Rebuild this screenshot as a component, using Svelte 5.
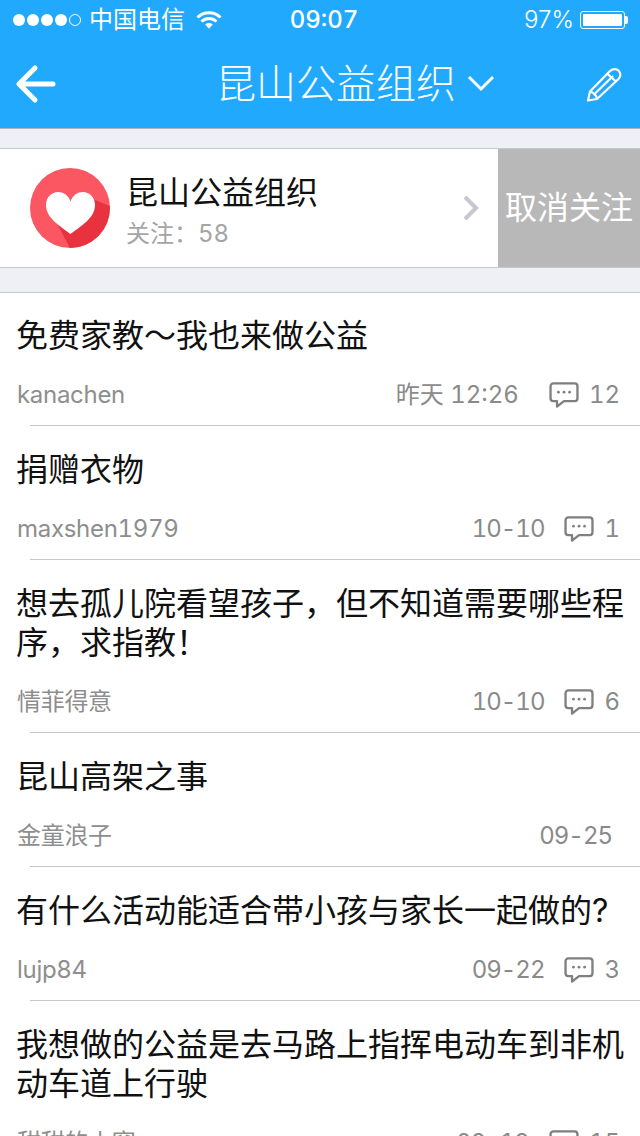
<script>
	const topics = [
		{ title: '免费家教～我也来做公益', author: 'kanachen', date: '昨天 12:26', count: 12 },
		{ title: '捐赠衣物', author: 'maxshen1979', date: '10-10', count: 1 },
		{ title: '想去孤儿院看望孩子，但不知道需要哪些程序，求指教！', author: '情菲得意', date: '10-10', count: 6 },
		{ title: '昆山高架之事', author: '金童浪子', date: '09-25' },
		{ title: '有什么活动能适合带小孩与家长一起做的?', author: 'lujp84', date: '09-22', count: 3 },
		{ title: '我想做的公益是去马路上指挥电动车到非机动车道上行驶', author: '甜甜的小窝', date: '09-19', count: 15 }
	];
</script>

<div class="page" lang="zh-CN">
	<header class="top">
		<div class="status">
			<div class="carrier">
				<span class="signal">
					{#each [1, 2, 3, 4, 5] as n}
						<i class:off={n === 5}></i>
					{/each}
				</span>
				<span>中国电信</span>
				<svg class="wifi" width="26" height="20" viewBox="0 0 26 20">
					<path d="M1.5 7.5a16.5 16.5 0 0 1 23 0" />
					<path d="M5.5 11.5a11 11 0 0 1 15 0" />
					<path class="solid" d="M9.2 14.6a5.6 5.6 0 0 1 7.6 0L13 18.8z" />
				</svg>
			</div>
			<div class="clock">09:07</div>
			<div class="power">
				<span>97%</span>
				<span class="battery"><i></i></span>
				<span class="nub"></span>
			</div>
		</div>
		<nav class="bar">
			<svg class="back" width="42" height="42" viewBox="0 0 42 42">
				<path d="M38 21H4M20 5 4 21l16 16" />
			</svg>
			<div class="heading">
				<span>昆山公益组织</span>
				<svg width="28" height="18" viewBox="0 0 28 18"><path d="M2 3l12 12L26 3" /></svg>
			</div>
			<svg class="pencil" width="38" height="38" viewBox="0 0 38 38">
				<path d="M3 35.500 5 26.500 24.500 6.500C27.500 3.500 31.500 3.500 33.500 5.500 36 8 36 11.500 33.500 14L12 34z" />
				<path d="M5 26.500C8 27 11.500 30 12 34M8.500 30 28 11M22 8.500l9.500 8.500" />
			</svg>
		</nav>
	</header>

	<section class="group">
		<div class="group-main">
			<svg class="logo" width="80" height="80" viewBox="0 0 80 80">
				<circle cx="40" cy="40" r="40" fill="#fb5763" />
				<path d="M65 32 79.800 38A40 40 0 0 1 40 80L26.700 55z" fill="#e8323f" />
				<path d="M40.500 66C30 58 16 50 16 37 16 29 22 24 28 24 33 24 38.500 27 40.500 33.700 42.500 27 48 24 53 24 59 24 65 29 65 37 65 50 51 58 40.500 66z" fill="#fff" />
			</svg>
			<div class="group-text">
				<div class="group-name">昆山公益组织</div>
				<div class="group-follow">关注：58</div>
			</div>
			<svg class="more" width="18" height="28" viewBox="0 0 18 28"><path d="M3 3l11 11L3 25" /></svg>
		</div>
		<div class="unfollow">取消关注</div>
	</section>

	<ul class="list">
		{#each topics as t}
			<li class="row">
				<div class="title">{t.title}</div>
				<div class="meta" class:plain={t.count === undefined}>
					<span class="author">{t.author}</span>
					<span class="date" class:long={t.date.includes(' ')}>{t.date}</span>
					{#if t.count !== undefined}
						<svg class="bubble" width="30" height="26" viewBox="0 0 32 28">
							<path d="M4.500 1.500h23a3 3 0 0 1 3 3v13a3 3 0 0 1-3 3H16L8.500 26.500v-6h-4a3 3 0 0 1-3-3v-13a3 3 0 0 1 3-3z" />
							<circle cx="10" cy="11" r="1.500" />
							<circle cx="16" cy="11" r="1.500" />
							<circle cx="22" cy="11" r="1.500" />
						</svg>
						<span class="count">{t.count}</span>
					{/if}
				</div>
			</li>
		{/each}
	</ul>
</div>

<style>
	:global(body) {
		margin: 0;
		background: #efeff6;
	}

	.page {
		height: 1136px;
		overflow: hidden;
		background: #efeff6;
		font-family: Inter, "Noto Sans CJK SC", sans-serif;
		font-variant-numeric: tabular-nums;
	}

	.top {
		background: #21a9fe;
		color: #fff;
		border-bottom: 1px solid #aeb4ba;
	}

	.status {
		height: 40px;
		display: grid;
		grid-template-columns: 1fr auto 1fr;
		align-items: center;
		padding: 0 12px 0 13px;
		font-size: 24px;
		line-height: 30px;
	}

	.carrier {
		display: flex;
		align-items: center;
		gap: 8px;
	}

	.signal {
		display: flex;
		gap: 2px;
	}

	.signal i {
		width: 12px;
		height: 12px;
		border-radius: 50%;
		background: #fff;
		box-sizing: border-box;
	}

	.signal i.off {
		background: none;
		border: 1px solid #fff;
	}

	.wifi {
		margin-left: 3px;
	}

	.wifi path {
		fill: none;
		stroke: #fff;
		stroke-width: 3;
	}

	.wifi path.solid {
		fill: #fff;
		stroke: none;
	}

	.clock {
		font-weight: 500;
		margin-left: 7px;
	}

	.power {
		display: flex;
		align-items: center;
		justify-content: flex-end;
		gap: 6px;
		font-weight: 300;
		font-variant-numeric: normal;
	}

	.battery {
		width: 45px;
		height: 18px;
		box-sizing: border-box;
		border: 1px solid #fff;
		border-radius: 3px;
		padding: 2px;
		display: flex;
	}

	.battery i {
		flex: 1;
		background: #fff;
		border-radius: 1px;
	}

	.nub {
		width: 3px;
		height: 8px;
		margin-left: -6px;
		background: #fff;
		border-radius: 0 2px 2px 0;
	}

	.bar {
		height: 88px;
		display: grid;
		grid-template-columns: 201px 1fr auto;
		align-items: center;
		padding: 0 17px 0 15px;
	}

	.back path {
		fill: none;
		stroke: #fff;
		stroke-width: 5;
		stroke-linecap: round;
		stroke-linejoin: round;
	}

	.heading {
		display: flex;
		align-items: center;
		gap: 11px;
		font-size: 40px;
		line-height: 44px;
		font-weight: 300;
	}

	.heading svg {
		margin-bottom: 2px;
	}

	.heading path {
		fill: none;
		stroke: #fff;
		stroke-width: 3;
	}

	.pencil path {
		fill: none;
		stroke: #fff;
		stroke-width: 2.200;
		stroke-linejoin: round;
	}

	.group {
		margin-top: 19px;
		height: 118px;
		display: flex;
		background: #fff;
		border-top: 1px solid #c8c8cc;
		border-bottom: 1px solid #c8c8cc;
	}

	.group-main {
		flex: 1;
		display: flex;
		align-items: center;
		padding: 0 18px 0 30px;
	}

	.logo {
		margin-right: 16px;
	}

	.group-text {
		flex: 1;
		padding-top: 5px;
	}

	.group-name {
		font-size: 32px;
		line-height: 40px;
		color: #111;
	}

	.group-follow {
		margin-top: 6px;
		font-size: 24px;
		line-height: 30px;
		color: #a5a5a5;
	}

	.more path {
		fill: none;
		stroke: #c8c7d1;
		stroke-width: 4;
	}

	.unfollow {
		width: 142px;
		display: flex;
		align-items: center;
		justify-content: center;
		background: #b8b8b8;
		color: #fff;
		font-size: 32px;
		line-height: 40px;
		box-sizing: border-box;
	}

	.list {
		list-style: none;
		margin: 24px 0 0;
		padding: 0;
		background: #fff;
		border-top: 1px solid #c8c8cc;
	}

	.row {
		padding: 24px 0 16px 16px;
		background: linear-gradient(#c8c8cc, #c8c8cc) 30px 100% / 100% 1px no-repeat;
	}

	.row:first-child {
		padding-top: 23px;
	}

	.title {
		font-size: 32px;
		line-height: 39px;
		color: #111;
		padding-right: 10px;
	}

	.meta {
		margin-top: 25px;
		height: 30px;
		display: flex;
		align-items: center;
		font-size: 24px;
		line-height: 30px;
		color: #8a8a8a;
		padding-right: 20px;
	}

	.meta.plain {
		padding-right: 28px;
	}

	.author {
		flex: 1;
		padding-left: 1px;
		letter-spacing: -0.3px;
		color: #8e8e8e;
	}

	.date {
		letter-spacing: -1px;
	}

	.date.long {
		margin-right: 10px;
		letter-spacing: 0;
	}

	.bubble {
		margin: 0 10px 0 20px;
	}

	.bubble path {
		fill: none;
		stroke: #7f7f7f;
		stroke-width: 2.500;
		stroke-linejoin: round;
	}

	.bubble circle {
		fill: #7f7f7f;
	}
</style>
